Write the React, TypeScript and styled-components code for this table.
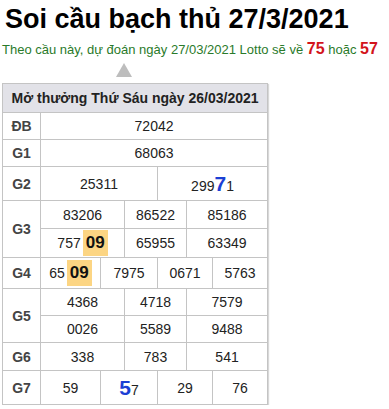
import styled, { createGlobalStyle } from "styled-components";

const Global = createGlobalStyle`
  body {
    margin: 0;
    background: #fff;
    font-family: "Liberation Sans", Arial, sans-serif;
  }
`;

const Page = styled.div`
  padding: 0 2px;
`;

const Title = styled.h1`
  margin: 0;
  padding: 4px 0 0 3px;
  font-size: 27px;
  line-height: 31px;
  font-weight: 700;
  color: #000;
`;

const Lead = styled.p`
  margin: 4px 0 0;
  font-size: 13px;
  line-height: 20px;
  color: #2a7a2a;
  white-space: nowrap;
`;

const Hit = styled.b`
  color: #d3141c;
  font-size: 16px;
`;

const Arrow = styled.div`
  width: 0;
  height: 0;
  margin: 3px 0 6px 114px;
  border-left: 8px solid transparent;
  border-right: 8px solid transparent;
  border-bottom: 14px solid #bdbdbd;
`;

const Table = styled.table`
  width: 266px;
  table-layout: fixed;
  border-collapse: collapse;
  border: 1px solid #c4c4c4;
  box-shadow: 1px 1px 1px #d8d8d8;
  font-size: 14px;
  color: #222;
  text-align: center;
`;

const Head = styled.th`
  height: 28px;
  padding: 0;
  background: #e2e2e8;
  border: 1px solid #c4c4c4;
  font-size: 14px;
  font-weight: 700;
  color: #222;
`;

const Label = styled.td`
  padding: 0;
  border: 1px solid #c4c4c4;
  font-weight: 700;
  color: #444;
`;

const Cell = styled.td<{ $h?: number }>`
  height: ${(p) => p.$h ?? 26}px;
  padding: 0;
  border: 1px solid #c4c4c4;
`;

const Mark = styled.b`
  display: inline-block;
  margin-left: 2px;
  padding: 0 3px;
  line-height: 26px;
  background: #fcd583;
  font-size: 17px;
  color: #111;
`;

const Big = styled.b`
  font-size: 21px;
  color: #1b3fd4;
`;

const widths = [38, 60, 24, 33, 29, 26, 55];

// spans over the 6 data columns
const two = [3, 3];
const three = [2, 2, 2];
const four = [1, 2, 2, 1];

function Row({
  label,
  spans,
  items,
  h,
  rowSpan,
}: {
  label?: string;
  spans: number[];
  items: React.ReactNode[];
  h?: number;
  rowSpan?: number;
}) {
  return (
    <tr>
      {label && <Label rowSpan={rowSpan}>{label}</Label>}
      {items.map((it, i) => (
        <Cell key={i} colSpan={spans[i]} $h={h}>
          {it}
        </Cell>
      ))}
    </tr>
  );
}

export default function App() {
  return (
    <Page>
      <Global />
      <Title>Soi cầu bạch thủ 27/3/2021</Title>
      <Lead>
        Theo cầu này, dự đoán ngày 27/03/2021 Lotto sẽ về <Hit>75</Hit> hoặc{" "}
        <Hit>57</Hit>
      </Lead>
      <Arrow />
      <Table>
        <colgroup>
          {widths.map((w, i) => (
            <col key={i} style={{ width: w }} />
          ))}
        </colgroup>
        <thead>
          <tr>
            <Head colSpan={7}>Mở thưởng Thứ Sáu ngày 26/03/2021</Head>
          </tr>
        </thead>
        <tbody>
          <Row label="ĐB" spans={[6]} items={["72042"]} />
          <Row label="G1" spans={[6]} items={["68063"]} />
          <Row
            label="G2"
            spans={two}
            h={33}
            items={[
              "25311",
              <>
                299<Big>7</Big>1
              </>,
            ]}
          />
          <Row label="G3" rowSpan={2} spans={three} h={27} items={["83206", "86522", "85186"]} />
          <Row
            spans={three}
            h={28}
            items={[
              <>
                757<Mark>09</Mark>
              </>,
              "65955",
              "63349",
            ]}
          />
          <Row
            label="G4"
            spans={four}
            h={30}
            items={[
              <>
                65<Mark>09</Mark>
              </>,
              "7975",
              "0671",
              "5763",
            ]}
          />
          <Row label="G5" rowSpan={2} spans={three} items={["4368", "4718", "7579"]} />
          <Row spans={three} items={["0026", "5589", "9488"]} />
          <Row label="G6" spans={three} h={27} items={["338", "783", "541"]} />
          <Row
            label="G7"
            spans={four}
            h={33}
            items={[
              "59",
              <>
                <Big>5</Big>7
              </>,
              "29",
              "76",
            ]}
          />
        </tbody>
      </Table>
    </Page>
  );
}
